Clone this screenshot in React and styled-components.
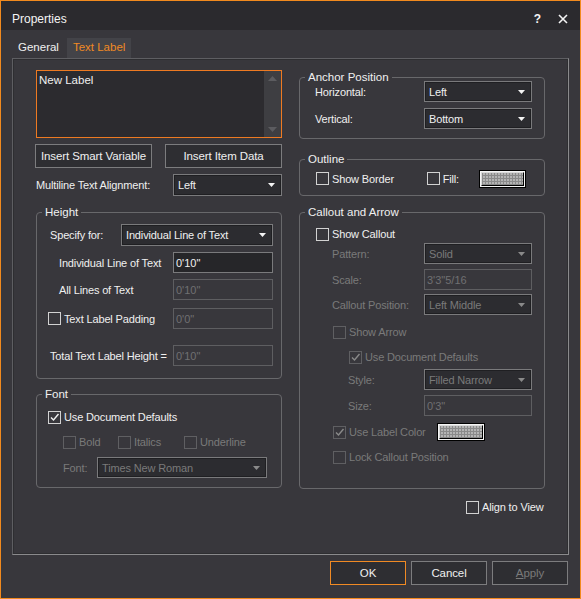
import React from "react"
import styled, { createGlobalStyle } from "styled-components"

const GlobalStyle = createGlobalStyle`
  body {
    margin: 0;
    background: #38373c;
    font-family: "Liberation Sans", Arial, sans-serif;
    font-size: 11px;
    color: #f0f0f0;
  }
  * { box-sizing: border-box; }
`

const Window = styled.div`
  width: 581px;
  height: 599px;
  border: 1px solid #f28a1e;
  background: #38373c;
  display: flex;
  flex-direction: column;
`
const TitleBar = styled.div`
  height: 29px;
  background: #2b2a2e;
  display: flex;
  align-items: center;
  padding: 6px 12px 0 11px;
  font-size: 12px;
  color: #f4f4f4;
`
const Title = styled.div`
  flex: 1;
`
const TitleButtons = styled.div`
  display: flex;
  align-items: center;
  gap: 17px;
  font-weight: bold;
  font-size: 12px;
`
const TabRow = styled.div`
  height: 28px;
  display: flex;
  align-items: flex-end;
  padding-left: 11px;
  gap: 2px;
`
const Tab = styled.div`
  height: 20px;
  line-height: 19px;
  padding: 0 6px;
  font-size: 11.5px;
  color: ${p => (p.$active ? "#f08a24" : "#f0f0f0")};
  background: ${p => (p.$active ? "#434348" : "transparent")};
`
const Panel = styled.div`
  margin: 0 11px;
  height: 497px;
  border: 1px solid;
  border-color: #5e5e62 #8a8a8c #8a8a8c #5e5e62;
  box-shadow: inset 0 0 0 1px #2e2e31;
  padding: 11px 0 0 23px;
  display: flex;
  gap: 17px;
`
const Column = styled.div`
  width: 246px;
  display: flex;
  flex-direction: column;
  padding-top: ${p => p.$top || 0}px;
`
const LabelBox = styled.div`
  height: 68px;
  border: 1px solid #ee7a22;
  background: #2c2b2f;
  display: flex;
`
const LabelText = styled.div`
  flex: 1;
  padding: 3px 2px;
  font-size: 11.5px;
`
const ScrollBar = styled.div`
  width: 17px;
  background: #3e3e42;
  display: flex;
  flex-direction: column;
  justify-content: space-between;
  align-items: center;
  padding: 5px 0;
`
const ButtonRow = styled.div`
  display: flex;
  justify-content: space-between;
  margin-top: 6px;
  margin-left: -1px;
`
const Button = styled.button`
  width: ${p => p.$w || 76}px;
  height: 24px;
  background: #2e2e32;
  border: 1px solid ${p => (p.$focus ? "#f08a24" : "#7c7c7e")};
  color: ${p => (p.$disabled ? "#7a7a7a" : "#f0f0f0")};
  font-family: "Liberation Sans", Arial, sans-serif;
  font-size: 11.5px;
  padding: 0;
  letter-spacing: -0.1px;

  u { text-decoration: underline; }
`
const Row = styled.div`
  display: flex;
  align-items: center;
  justify-content: ${p => (p.$start ? "flex-start" : "space-between")};
  height: ${p => p.$h || 21}px;
  margin-top: ${p => p.$mt || 0}px;
  padding-left: ${p => p.$indent || 0}px;
`
const Label = styled.span`
  color: ${p => (p.$disabled ? "#7a7a7a" : "#f0f0f0")};
  white-space: nowrap;
  letter-spacing: -0.15px;
`
const Combo = styled.div`
  width: ${p => p.$w}px;
  height: ${p => p.$h || 21}px;
  border: 1px solid #7a7a7c;
  box-shadow: inset 0 0 0 1px #1f1f22;
  background: #2c2c30;
  display: flex;
  align-items: center;
  justify-content: space-between;
  padding: 0 6px 0 4px;
  color: ${p => (p.$disabled ? "#7a7a7a" : "#f0f0f0")};
  letter-spacing: -0.15px;
`
const Field = styled.div`
  width: ${p => p.$w || 100}px;
  height: 21px;
  border: 1px solid ${p => (p.$disabled ? "#5e5e61" : "#7a7a7c")};
  background: ${p => (p.$disabled ? "#38373c" : "#262629")};
  display: flex;
  align-items: center;
  padding-left: 2px;
  color: ${p => (p.$disabled ? "#707072" : "#f0f0f0")};
`
const Group = styled.fieldset`
  margin: ${p => p.$mt || 0}px 0 0 0;
  padding: ${p => p.$pt || 0}px ${p => p.$pr || 8}px ${p => p.$pb || 0}px ${p => p.$pl || 11}px;
  border: 1px solid #68686b;
  border-radius: 4px;
  min-width: 0;
  height: ${p => (p.$h ? `${p.$h}px` : "auto")};

  legend {
    margin-left: ${p => 5 - (p.$pl || 11)}px;
  }
`
const Legend = styled.legend`
  padding: 0 3px;
  line-height: 12px;
  font-size: 11.5px;
  color: #f0f0f0;
`
const Check = styled.label`
  display: inline-flex;
  align-items: center;
  gap: 3px;
  width: ${p => (p.$w ? `${p.$w}px` : "auto")};
  color: ${p => (p.$disabled ? "#7a7a7a" : "#f0f0f0")};
  letter-spacing: -0.15px;
  white-space: nowrap;
`
const Box = styled.span`
  width: 13px;
  height: 13px;
  border: 1px solid ${p => (p.$disabled ? "#5f5f62" : "#d2d2d2")};
  display: inline-flex;
  align-items: center;
  justify-content: center;
`
const Swatch = styled.div`
  width: ${p => p.$w}px;
  height: 18px;
  border: 1px solid #000;
  padding: 1px;
  background: #f4f4f4;
  margin-left: ${p => p.$ml || 0}px;
`
const SwatchFill = styled.div`
  width: 100%;
  height: 100%;
  border: 1px solid #000;
  border-top-color: #d8d8d8;
  border-left-color: #d8d8d8;
  background-color: #b4b4b4;
  background-image:
    repeating-linear-gradient(90deg, #8a8a8a 0 1px, transparent 1px 3px),
    repeating-linear-gradient(0deg, #8a8a8a 0 1px, transparent 1px 3px);
`
const Footer = styled.div`
  display: flex;
  justify-content: flex-end;
  gap: 5px;
  padding: 6px 12px 0 0;
`

const Arrow = ({ disabled }) => (
  <svg width="7" height="4" viewBox="0 0 7 4">
    <path d="M0 0h7L3.5 4z" fill={disabled ? "#8a8a8a" : "#f4f4f4"} />
  </svg>
)

const Checkbox = ({ checked, disabled, children, w }) => (
  <Check $disabled={disabled} $w={w}>
    <Box $disabled={disabled}>
      {checked && (
        <svg width="11" height="11" viewBox="0 0 11 11">
          <path d="M2 5.5l2.5 2.5L9.5 2" fill="none" stroke={disabled ? "#8a8a8a" : "#f0f0f0"} strokeWidth="1.4" />
        </svg>
      )}
    </Box>
    {children}
  </Check>
)

const ComboBox = ({ value, w, disabled, h }) => (
  <Combo $w={w} $disabled={disabled} $h={h}>
    <span>{value}</span>
    <Arrow disabled={disabled} />
  </Combo>
)

export default function App() {
  return (
    <>
      <GlobalStyle />
      <Window>
        <TitleBar>
          <Title>Properties</Title>
          <TitleButtons>
            <span>?</span>
            <svg width="10" height="10" viewBox="0 0 10 10">
              <path d="M1 1l8 8M9 1L1 9" stroke="#f4f4f4" strokeWidth="1.6" />
            </svg>
          </TitleButtons>
        </TitleBar>
        <TabRow>
          <Tab>General</Tab>
          <Tab $active>Text Label</Tab>
        </TabRow>
        <Panel>
          <Column>
            <LabelBox>
              <LabelText>New Label</LabelText>
              <ScrollBar>
                <svg width="9" height="5" viewBox="0 0 9 5"><path d="M0 5h9L4.5 0z" fill="#5c5c60" /></svg>
                <svg width="9" height="5" viewBox="0 0 9 5"><path d="M0 0h9L4.5 5z" fill="#5c5c60" /></svg>
              </ScrollBar>
            </LabelBox>
            <ButtonRow>
              <Button $w={117}>Insert Smart Variable</Button>
              <Button $w={117}>Insert Item Data</Button>
            </ButtonRow>
            <Row $h={22} $mt={6}>
              <Label>Multiline Text Alignment:</Label>
              <ComboBox value="Left" w={109} h={22} />
            </Row>

            <Group $mt={10} $pb={12}>
              <Legend>Height</Legend>
              <Row $h={22} $mt={6} $indent={2}>
                <Label>Specify for:</Label>
                <ComboBox value="Individual Line of Text" w={152} h={22} />
              </Row>
              <Row $mt={6} $indent={11}>
                <Label>Individual Line of Text</Label>
                <Field>0'10"</Field>
              </Row>
              <Row $mt={6} $indent={11}>
                <Label>All Lines of Text</Label>
                <Field $disabled>0'10"</Field>
              </Row>
              <Row $mt={8}>
                <Checkbox>Text Label Padding</Checkbox>
                <Field $disabled>0'0"</Field>
              </Row>
              <Row $mt={16} $indent={2}>
                <Label>Total Text Label Height =</Label>
                <Field $disabled>0'10"</Field>
              </Row>
            </Group>

            <Group $mt={9} $h={100} $pr={14}>
              <Legend>Font</Legend>
              <Row $h={14} $mt={10}>
                <Checkbox checked>Use Document Defaults</Checkbox>
              </Row>
              <Row $h={14} $mt={11} $indent={15} $start>
                <Checkbox disabled w={55}>Bold</Checkbox>
                <Checkbox disabled w={66}>Italics</Checkbox>
                <Checkbox disabled>Underline</Checkbox>
              </Row>
              <Row $mt={8} $indent={15}>
                <Label $disabled>Font:</Label>
                <ComboBox value="Times New Roman" w={170} disabled />
              </Row>
            </Group>
          </Column>

          <Column $top={1}>
            <Group $pr={12} $pb={9} $pl={15}>
              <Legend>Anchor Position</Legend>
              <Row $mt={-2}>
                <Label>Horizontal:</Label>
                <ComboBox value="Left" w={108} />
              </Row>
              <Row $mt={6}>
                <Label>Vertical:</Label>
                <ComboBox value="Bottom" w={108} />
              </Row>
            </Group>

            <Group $mt={14} $pr={18} $pb={7} $pl={16}>
              <Legend>Outline</Legend>
              <Row $h={19} $mt={4}>
                <Checkbox>Show Border</Checkbox>
                <Row $h={19}>
                  <Checkbox>Fill:</Checkbox>
                  <Swatch $w={47} $ml={20}><SwatchFill /></Swatch>
                </Row>
              </Row>
            </Group>

            <Group $mt={10} $h={283} $pr={12} $pl={16}>
              <Legend>Callout and Arrow</Legend>
              <Row $h={14} $mt={9}>
                <Checkbox>Show Callout</Checkbox>
              </Row>
              <Row $mt={2} $indent={16}>
                <Label $disabled>Pattern:</Label>
                <ComboBox value="Solid" w={108} disabled />
              </Row>
              <Row $mt={5} $indent={16}>
                <Label $disabled>Scale:</Label>
                <Field $disabled $w={108}>3'3"5/16</Field>
              </Row>
              <Row $mt={4} $indent={16}>
                <Label $disabled>Callout Position:</Label>
                <ComboBox value="Left Middle" w={108} disabled />
              </Row>
              <Row $h={14} $mt={10} $indent={17}>
                <Checkbox disabled>Show Arrow</Checkbox>
              </Row>
              <Row $h={14} $mt={11} $indent={33}>
                <Checkbox disabled checked>Use Document Defaults</Checkbox>
              </Row>
              <Row $mt={5} $indent={32}>
                <Label $disabled>Style:</Label>
                <ComboBox value="Filled Narrow" w={108} disabled />
              </Row>
              <Row $mt={5} $indent={32}>
                <Label $disabled>Size:</Label>
                <Field $disabled $w={108}>0'3"</Field>
              </Row>
              <Row $h={18} $mt={7} $indent={17} $start>
                <Checkbox disabled checked w={104}>Use Label Color</Checkbox>
                <Swatch $w={48}><SwatchFill /></Swatch>
              </Row>
              <Row $h={14} $mt={9} $indent={17}>
                <Checkbox disabled>Lock Callout Position</Checkbox>
              </Row>
            </Group>

            <Row $h={14} $mt={11} $indent={167}>
              <Checkbox>Align to View</Checkbox>
            </Row>
          </Column>
        </Panel>
        <Footer>
          <Button $focus>OK</Button>
          <Button>Cancel</Button>
          <Button $disabled><u>A</u>pply</Button>
        </Footer>
      </Window>
    </>
  )
}
